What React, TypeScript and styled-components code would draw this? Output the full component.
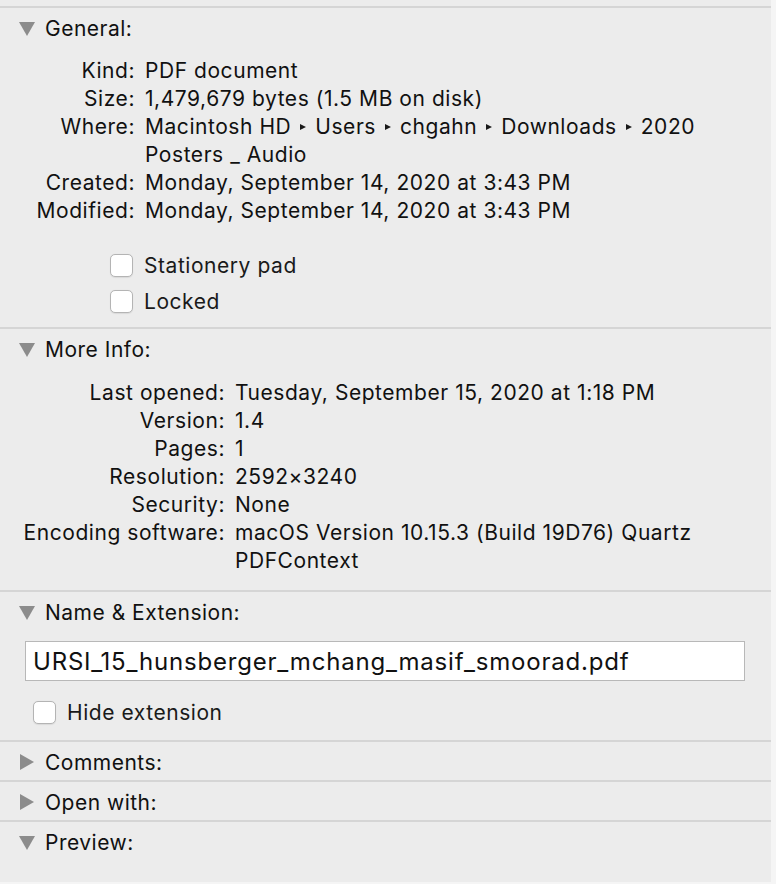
import { Fragment } from "react";
import styled, { createGlobalStyle } from "styled-components";

const GlobalStyle = createGlobalStyle`
  html, body {
    margin: 0;
    padding: 0;
    background: #f5f5f5;
  }
  body {
    font-family: Inter, "Liberation Sans", sans-serif;
    color: #111;
    -webkit-font-smoothing: antialiased;
  }
`;

const Panel = styled.div`
  width: 771px;
  height: 882px;
  box-sizing: border-box;
  padding-top: 6px;
  background: #ececec;
  display: flex;
  flex-direction: column;
`;

const Section = styled.section<{ $grow?: boolean }>`
  border-top: 2px solid #d5d5d5;
  flex: ${({ $grow }) => ($grow ? 1 : "none")};
`;

const SectionHeader = styled.div`
  height: 38px;
  box-sizing: border-box;
  padding: 2px 0 0 19px;
  display: flex;
  align-items: center;
  gap: 10px;
  font-size: 21px;
  letter-spacing: 0.5px;
  color: #111;
`;

const Disclosure = styled.svg`
  width: 16px;
  height: 16px;
  flex: none;
`;

const SectionBody = styled.div<{ $top: number; $bottom: number }>`
  padding-top: ${({ $top }) => $top}px;
  padding-bottom: ${({ $bottom }) => $bottom}px;
`;

const InfoGrid = styled.div<{ $labelWidth: number }>`
  display: grid;
  grid-template-columns: ${({ $labelWidth }) => $labelWidth}px 1fr;
  column-gap: 10px;
  font-size: 21px;
  letter-spacing: 0.55px;
  line-height: 28px;
  padding-top: 1px;
`;

const Label = styled.div`
  text-align: right;
  white-space: nowrap;
`;

const Value = styled.div`
  white-space: nowrap;
`;

const ValueLine = styled.div``;

const PathArrow = styled.span`
  display: inline-block;
  width: 0;
  height: 0;
  margin: 0 9px 2px 9px;
  vertical-align: middle;
  border-left: 6px solid #1a1a1a;
  border-top: 3.5px solid transparent;
  border-bottom: 3.5px solid transparent;
`;

const CheckGroup = styled.div<{ $left: number; $top: number }>`
  margin-top: ${({ $top }) => $top}px;
  padding-left: ${({ $left }) => $left}px;
  display: flex;
  flex-direction: column;
`;

const CheckRow = styled.label`
  height: 36px;
  display: flex;
  align-items: center;
  gap: 11px;
  font-size: 21px;
  letter-spacing: 0.55px;
  color: #1a1a1a;
`;

const CheckBox = styled.span`
  width: 21px;
  height: 21px;
  background: #fff;
  border: 1px solid #b4b4b4;
  border-radius: 5px;
  box-shadow: 0 0.5px 1px rgba(0, 0, 0, 0.08);
`;

const NameField = styled.div`
  margin: 11px 0 0 25px;
  width: 720px;
  height: 40px;
  box-sizing: border-box;
  background: #fff;
  border: 1px solid #b8b8b8;
  display: flex;
  align-items: center;
  padding-left: 7px;
  font-size: 24px;
  letter-spacing: 0.8px;
  color: #111;
`;

function Triangle({ open }: { open: boolean }) {
  return (
    <Disclosure viewBox="0 0 16 16">
      {open ? (
        <polygon points="0,2 16,2 8,16" fill="#8c8c8c" />
      ) : (
        <polygon points="1,0 15,8 1,16" fill="#8c8c8c" />
      )}
    </Disclosure>
  );
}

const general: [string, string[]][] = [
  ["Kind:", ["PDF document"]],
  ["Size:", ["1,479,679 bytes (1.5 MB on disk)"]],
  ["Where:", ["PATH", "Posters _ Audio"]],
  ["Created:", ["Monday, September 14, 2020 at 3:43 PM"]],
  ["Modified:", ["Monday, September 14, 2020 at 3:43 PM"]],
];

const moreInfo: [string, string[]][] = [
  ["Last opened:", ["Tuesday, September 15, 2020 at 1:18 PM"]],
  ["Version:", ["1.4"]],
  ["Pages:", ["1"]],
  ["Resolution:", ["2592×3240"]],
  ["Security:", ["None"]],
  ["Encoding software:", ["macOS Version 10.15.3 (Build 19D76) Quartz", "PDFContext"]],
];

const pathParts = ["Macintosh HD", "Users", "chgahn", "Downloads", "2020"];

function InfoRows({ rows, labelWidth }: { rows: [string, string[]][]; labelWidth: number }) {
  return (
    <InfoGrid $labelWidth={labelWidth}>
      {rows.map(([label, lines]) => (
        <Fragment key={label}>
          <Label>{label}</Label>
          <Value>
            {lines.map((line) => (
              <ValueLine key={line}>
                {line === "PATH"
                  ? pathParts.map((p, i) => (
                      <Fragment key={p}>
                        {i > 0 && <PathArrow />}
                        {p}
                      </Fragment>
                    ))
                  : line}
              </ValueLine>
            ))}
          </Value>
        </Fragment>
      ))}
    </InfoGrid>
  );
}

export default function App() {
  return (
    <>
      <GlobalStyle />
      <Panel>
        <Section>
          <SectionHeader>
            <Triangle open />
            General:
          </SectionHeader>
          <SectionBody $top={10} $bottom={8}>
            <InfoRows rows={general} labelWidth={135} />
            <CheckGroup $left={110} $top={22}>
              <CheckRow>
                <CheckBox />
                Stationery pad
              </CheckRow>
              <CheckRow>
                <CheckBox />
                Locked
              </CheckRow>
            </CheckGroup>
          </SectionBody>
        </Section>

        <Section>
          <SectionHeader>
            <Triangle open />
            More Info:
          </SectionHeader>
          <SectionBody $top={11} $bottom={15}>
            <InfoRows rows={moreInfo} labelWidth={225} />
          </SectionBody>
        </Section>

        <Section>
          <SectionHeader>
            <Triangle open />
            Name &amp; Extension:
          </SectionHeader>
          <SectionBody $top={0} $bottom={10}>
            <NameField>URSI_15_hunsberger_mchang_masif_smoorad.pdf</NameField>
            <CheckGroup $left={33} $top={13}>
              <CheckRow>
                <CheckBox />
                Hide extension
              </CheckRow>
            </CheckGroup>
          </SectionBody>
        </Section>

        <Section>
          <SectionHeader>
            <Triangle open={false} />
            Comments:
          </SectionHeader>
        </Section>

        <Section>
          <SectionHeader>
            <Triangle open={false} />
            Open with:
          </SectionHeader>
        </Section>

        <Section $grow>
          <SectionHeader>
            <Triangle open />
            Preview:
          </SectionHeader>
        </Section>
      </Panel>
    </>
  );
}
